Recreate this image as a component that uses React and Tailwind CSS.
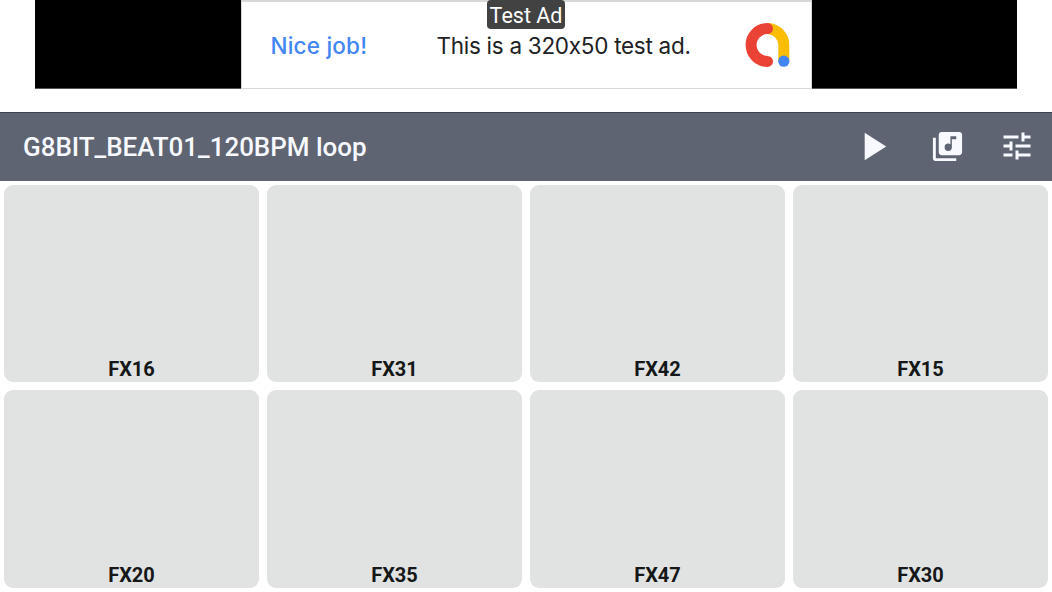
import { MdLibraryMusic, MdPlayArrow, MdTune } from 'react-icons/md';

const pads = ['FX16', 'FX31', 'FX42', 'FX15', 'FX20', 'FX35', 'FX47', 'FX30'];

const AdMobLogo = () => (
    <svg className="h-[44px] w-[44px]" viewBox="0 0 44 44" fill="none" overflow="visible">
        <path d="M22 5.5A16.5 16.5 0 0 1 37.8 22V38" stroke="#fbbc04" strokeWidth="11" />
        <path d="M21.5 5.6A16.4 16.4 0 0 0 21.5 38.4" stroke="#ea4335" strokeWidth="11" strokeLinecap="round" />
        <circle cx="37.8" cy="38.2" r="5.6" fill="#4285f4" />
    </svg>
);

const AdBanner = () => (
    <div className="flex h-[112px] justify-center">
        <div className="relative flex h-[89px] w-[982px] justify-center border-b border-[#555] bg-black">
            <div className="flex h-[89px] w-[571px] items-center border-x border-t-2 border-b border-[#d8d8d8] bg-white pl-[29px] font-['Inter',sans-serif] text-[22.5px] leading-7 whitespace-nowrap">
                <span className="w-[166px] pt-[2px] font-medium tracking-[0.2px] text-[#4285f4]">Nice job!</span>
                <span className="w-[309px] pt-[2px] tracking-[-0.28px] text-[#202124]">This is a 320x50 test ad.</span>
                <AdMobLogo />
            </div>
            <span className="absolute top-0 left-1/2 flex h-[29px] w-[78px] -translate-x-1/2 items-center justify-center rounded-[4px] bg-[#424242] pt-[3px] font-['Roboto',sans-serif] text-[21.5px] whitespace-nowrap text-white">
                Test Ad
            </span>
        </div>
    </div>
);

const Toolbar = () => (
    <header className="flex h-[69px] items-center border-t border-[#3c4352] bg-[#5f6472] pr-[17px] pb-[2px] pl-[23px] text-[#f7f9ff]">
        <h1 className="flex-1 pt-[2px] text-[26px] leading-8 font-medium tracking-[-0.04px] whitespace-nowrap">G8BIT_BEAT01_120BPM loop</h1>
        <button aria-label="Play">
            <MdPlayArrow className="h-[47px] w-[47px]" />
        </button>
        <button aria-label="Library" className="ml-[34.5px]">
            <MdLibraryMusic className="h-[35px] w-[35px]" />
        </button>
        <button aria-label="Settings" className="ml-[34px]">
            <MdTune className="h-[36px] w-[36px]" />
        </button>
    </header>
);

const App = () => {
    return (
        <div className="flex h-screen flex-col overflow-hidden bg-white font-['Roboto',sans-serif]">
            <AdBanner />
            <Toolbar />
            <main className="grid flex-1 grid-cols-4 grid-rows-[197px_198px] gap-2 p-1">
                {pads.map((name) => (
                    <button
                        key={name}
                        className="flex items-end justify-center rounded-[9px] bg-[#e1e3e2] text-[20px] leading-[26px] font-bold text-[#151718]"
                    >
                        {name}
                    </button>
                ))}
            </main>
        </div>
    );
};

export default App;
